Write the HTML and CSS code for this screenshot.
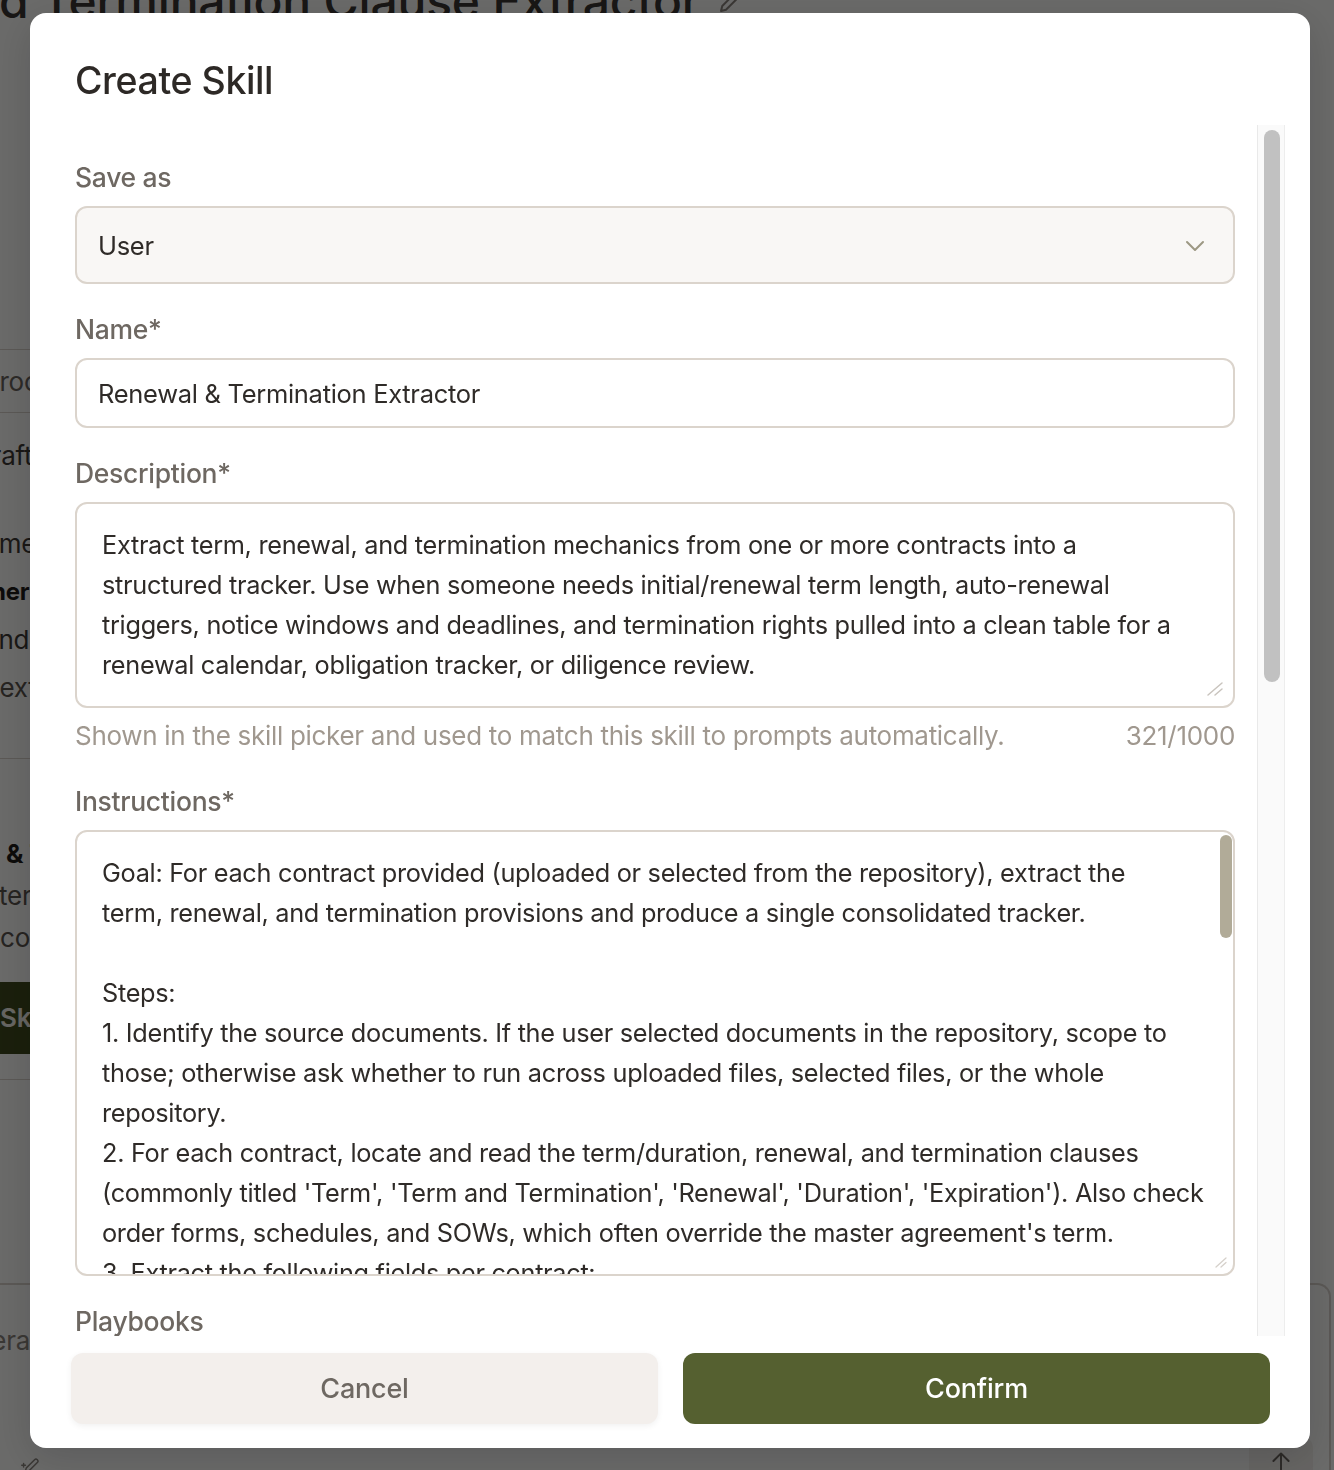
FILE: index.html
```html
<!DOCTYPE html>
<html lang="en">
<head>
    <meta charset="UTF-8">
    <title>Create Skill</title>
    <link rel="stylesheet" href="styles.css">
</head>
<body>
    <!-- page behind the dialog -->
    <div class="page">
        <h1 class="page-title">Renewal and Termination Clause Extractor
            <svg class="title-edit" width="30" height="30" viewBox="0 0 24 24" fill="none" stroke="currentColor" stroke-width="1.6" stroke-linecap="round" stroke-linejoin="round"><path d="M4 20l4-1 11-11-3-3L5 16z"/><path d="M14 7l3 3"/></svg>
        </h1>
        <div class="side">
            <div class="side-card">
                <div class="side-row row-proc">Procurement</div>
                <div class="side-row row-draft">Drafting</div>
                <div class="side-text">
                    <div class="row-name">Name of the skill</div>
                    <div class="row-other">Other</div>
                    <div class="row-and">and</div>
                    <div class="row-next">Next</div>
                </div>
            </div>
            <div class="side-card side-card-2">
                <div class="row-amp">&amp; Termination</div>
                <div class="row-intern">Intern</div>
                <div class="row-cor">cor</div>
                <div class="side-btn">Skills</div>
            </div>
        </div>
        <div class="composer">
            <div class="composer-text">Generate a tracker</div>
            <div class="composer-tools">
                <svg class="composer-icon" width="22" height="22" viewBox="0 0 24 24" fill="none" stroke="currentColor" stroke-width="1.6" stroke-linecap="round"><path d="M3 9h4M5 7v4"/><path d="M9 21l2-6 9-9a2 2 0 0 0-3-3l-9 9-2 6"/></svg>
                <span class="send"><svg width="26" height="26" viewBox="0 0 24 24" fill="none" stroke="currentColor" stroke-width="1.8" stroke-linecap="round" stroke-linejoin="round"><path d="M12 20V5M5 12l7-7 7 7"/></svg></span>
            </div>
        </div>
    </div>

    <div class="overlay">
        <div class="modal">
            <h2 class="modal-title">Create Skill</h2>
            <div class="modal-main">
                <div class="modal-body">
                    <div class="field">
                        <label class="label" for="saveAs">Save as</label>
                        <div class="select-wrap">
                            <select id="saveAs" class="control select">
                                <option>User</option>
                                <option>Team</option>
                            </select>
                            <svg class="chevron" width="22" height="14" viewBox="0 0 22 14" fill="none" stroke="#9d9883" stroke-width="2" stroke-linecap="round" stroke-linejoin="round"><path d="M3 3l8 8 8-8"/></svg>
                        </div>
                    </div>
                    <div class="field">
                        <label class="label" for="name">Name*</label>
                        <input id="name" class="control input" type="text" value="Renewal &amp; Termination Extractor">
                    </div>
                    <div class="field">
                        <label class="label" for="desc">Description*</label>
                        <div class="area-wrap">
                            <textarea id="desc" class="control area area-desc">Extract term, renewal, and termination mechanics from one or more contracts into a
structured tracker. Use when someone needs initial/renewal term length, auto-renewal
triggers, notice windows and deadlines, and termination rights pulled into a clean table for a
renewal calendar, obligation tracker, or diligence review.</textarea>
                            <svg class="grip grip-desc" width="18" height="16" viewBox="0 0 18 16" stroke="#c9c4be" stroke-width="1.5" stroke-linecap="round"><path d="M2 14L16 2M9 14l7-6"/></svg>
                        </div>
                        <div class="hint">
                            <span>Shown in the skill picker and used to match this skill to prompts automatically.</span>
                            <span>321/1000</span>
                        </div>
                    </div>
                    <div class="field">
                        <label class="label" for="instr">Instructions*</label>
                        <div class="area-wrap">
                            <textarea id="instr" class="control area area-instr">Goal: For each contract provided (uploaded or selected from the repository), extract the
term, renewal, and termination provisions and produce a single consolidated tracker.

Steps:
1. Identify the source documents. If the user selected documents in the repository, scope to
those; otherwise ask whether to run across uploaded files, selected files, or the whole
repository.
2. For each contract, locate and read the term/duration, renewal, and termination clauses
(commonly titled 'Term', 'Term and Termination', 'Renewal', 'Duration', 'Expiration'). Also check
order forms, schedules, and SOWs, which often override the master agreement's term.
3. Extract the following fields per contract:
- Counterparty and contract title
- Effective date and initial term length
- Initial term end date (calculate if only a duration is given)
- Renewal type: automatic, optional, or none
- Renewal term length and any cap on the number of renewals
- Non-renewal notice period and the resulting notice deadline
- Termination for convenience: who may terminate and the notice required
- Termination for cause: triggers, cure periods, and notice required
4. Calculate notice deadlines as calendar dates and flag any deadline within the next 90 days.
5. Where a clause is silent, record "Not specified" and quote the closest relevant language.
6. Cite the section number for every extracted value.</textarea>
                            <span class="area-thumb"></span>
                            <svg class="grip grip-instr" width="14" height="12" viewBox="0 0 14 12" stroke="#d6d1cb" stroke-width="1.3" stroke-linecap="round"><path d="M2 11L12 2M7 11l5-4.5"/></svg>
                        </div>
                    </div>
                    <div class="field">
                        <label class="label" for="playbook">Playbooks</label>
                        <div class="select-wrap">
                            <select id="playbook" class="control select">
                                <option>None</option>
                            </select>
                            <svg class="chevron" width="22" height="14" viewBox="0 0 22 14" fill="none" stroke="#9d9883" stroke-width="2" stroke-linecap="round" stroke-linejoin="round"><path d="M3 3l8 8 8-8"/></svg>
                        </div>
                    </div>
                </div>
                <div class="scroll-track"><div class="scroll-thumb"></div></div>
            </div>
            <div class="modal-footer">
                <button class="btn btn-cancel" type="button">Cancel</button>
                <button class="btn btn-confirm" type="button">Confirm</button>
            </div>
        </div>
    </div>
</body>
</html>
```

FILE: styles.css
```css
* {
    box-sizing: border-box;
}
html, body {
    margin: 0;
    height: 100%;
}
body {
    font-family: "Inter", "Noto Sans", sans-serif;
    background-color: #fdfcfb;
    color: #2f2b28;
    overflow: hidden;
    letter-spacing: -0.2px;
}

/* background page */
.page {
    height: 1470px;
    display: flex;
    flex-direction: column;
    overflow: hidden;
}
.page-title {
    margin: -28px 0 0 -262px;
    font-size: 48px;
    font-weight: 500;
    line-height: 58px;
    color: #3a3633;
    white-space: nowrap;
    display: flex;
    align-items: center;
    gap: 16px;
}
.title-edit {
    color: #8a847d;
}
.side {
    margin-top: 319px;
    width: 420px;
    margin-left: -40px;
    font-size: 26px;
    color: #3d3935;
}
.side-card {
    border-top: 1px solid #d8d2cb;
    border-bottom: 1px solid #d8d2cb;
}
.side-row {
    height: 63px;
    display: flex;
    align-items: center;
}
.row-proc {
    padding-left: 23px;
    border-bottom: 1px solid #d8d2cb;
    color: #6a645e;
}
.row-draft {
    padding-left: 13px;
    height: 84px;
}
.side-text {
    padding: 23px 0 46px;
    line-height: 48px;
}
.row-name { padding-left: 5px; }
.row-other { padding-left: 4px; font-weight: 700; color: #1f1c1a; font-size: 24px; }
.row-and { padding-left: 24px; }
.row-next { padding-left: 20px; color: #5a544e; }
.side-card-2 {
    border-top: none;
    padding-top: 74px;
    line-height: 42px;
}
.row-amp { padding-left: 46px; font-weight: 700; color: #1f1c1a; }
.row-intern { padding-left: 17px; color: #5a544e; }
.row-cor { padding-left: 40px; color: #5a544e; }
.side-btn {
    margin: 23px 0 25px;
    height: 72px;
    background-color: #3f4a1d;
    color: #f2f0ea;
    font-weight: 600;
    display: flex;
    align-items: center;
    padding-left: 40px;
}
.composer {
    margin: auto 3px 0 -20px;
    height: 187px;
    border: 2px solid #d8d2cb;
    border-bottom: none;
    border-radius: 14px 14px 0 0;
    padding: 40px 0 0 0;
    font-size: 26px;
    color: #8a847d;
}
.composer-text {
    margin-left: -40px;
}
.composer-tools {
    margin-top: 80px;
    display: flex;
    justify-content: space-between;
    align-items: center;
    padding: 0 16px 0 37px;
    color: #8a847d;
}
.send {
    width: 64px;
    height: 64px;
    border-radius: 12px;
    background-color: #f2efec;
    display: flex;
    align-items: flex-start;
    justify-content: center;
    padding-top: 12px;
    color: #6a645e;
}

/* dialog */
.overlay {
    position: fixed;
    inset: 0;
    background-color: rgba(0, 0, 0, 0.58);
    display: flex;
    align-items: flex-start;
    padding: 13px 0 0 30px;
}
.modal {
    width: 1280px;
    height: 1435px;
    background-color: #fff;
    border-radius: 16px;
    display: flex;
    flex-direction: column;
    box-shadow: 0 10px 40px rgba(0, 0, 0, 0.15);
}
.modal-title {
    margin: 45px 0 0 45px;
    font-size: 37.5px;
    line-height: 46px;
    font-weight: 500;
    color: #2d2926;
    letter-spacing: -0.4px;
}
.modal-main {
    margin: 21px 25px 0 0;
    height: 1211px;
    display: flex;
}
.modal-body {
    flex: 1;
    overflow: hidden;
    padding: 37px 22px 0 45px;
}
.scroll-track {
    width: 28px;
    background-color: #fafafa;
    border-left: 1px solid #e9e9e9;
    border-right: 1px solid #ededed;
    padding: 5px 4px 0 6px;
}
.scroll-thumb {
    height: 552px;
    border-radius: 8px;
    background-color: #c1c1c1;
}

.field {
    display: flex;
    flex-direction: column;
    margin-bottom: 30px;
}
.label {
    font-size: 26.5px;
    line-height: 30px;
    font-weight: 500;
    color: #6e6862;
    margin-bottom: 14px;
    letter-spacing: -0.3px;
}
.control {
    font-family: inherit;
    font-size: 25.5px;
    color: #2f2b28;
    letter-spacing: -0.3px;
    border: 2px solid #dbd4cc;
    border-radius: 12px;
    background-color: #fff;
    outline: none;
    width: 100%;
}
.select-wrap,
.area-wrap {
    position: relative;
}
.select {
    appearance: none;
    -webkit-appearance: none;
    height: 78px;
    padding: 0 60px 0 21px;
    background-color: #f9f7f5;
}
.chevron {
    position: absolute;
    right: 29px;
    top: 33px;
    pointer-events: none;
}
.input {
    height: 70px;
    padding: 0 21px;
}
.area {
    padding: 21px 25px;
    line-height: 40px;
    resize: none;
    display: block;
    overflow: hidden;
    font-size: 25.3px;
}
.area-desc {
    height: 206px;
}
.area-instr {
    height: 446px;
    padding-right: 18px;
}
.grip {
    position: absolute;
    pointer-events: none;
}
.grip-desc {
    right: 11px;
    bottom: 11px;
}
.grip-instr {
    right: 7px;
    bottom: 8px;
}
.area-thumb {
    position: absolute;
    right: 3px;
    top: 5px;
    width: 12px;
    height: 103px;
    border-radius: 6px;
    background-color: #b1ab98;
}
.hint {
    display: flex;
    justify-content: space-between;
    margin-top: 12px;
    margin-bottom: 4px;
    font-size: 26px;
    line-height: 32px;
    color: #a0988f;
    letter-spacing: -0.3px;
}

.modal-footer {
    display: flex;
    gap: 25px;
    padding: 0 40px 0 41px;
    margin-top: 17px;
}
.btn {
    flex: 1;
    height: 71px;
    border: none;
    border-radius: 12px;
    font-family: inherit;
    font-size: 27px;
    font-weight: 500;
    letter-spacing: -0.2px;
}
.btn-cancel {
    background-color: #f3efec;
    color: #6e6862;
    box-shadow: 0 2px 6px rgba(0, 0, 0, 0.06);
}
.btn-confirm {
    background-color: #556030;
    color: #fff;
}
```
